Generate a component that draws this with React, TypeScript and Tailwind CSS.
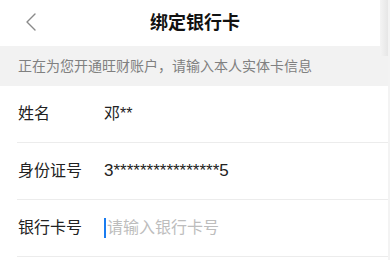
import React from "react";

const font = {
  fontFamily: '"Liberation Sans", "Noto Sans CJK SC", sans-serif',
};

function Row({ label, children }: { label: string; children: React.ReactNode }) {
  return (
    <div className="ml-[17px] flex h-[57px] items-center border-b border-[#ececec]">
      <span className="w-[87px] pl-px text-[16px] text-[#222]">{label}</span>
      <div className="flex items-center text-[16px] text-[#222]">{children}</div>
    </div>
  );
}

export default function App() {
  return (
    <div className="relative h-[260px] w-[390px] overflow-hidden bg-white" style={font}>
      <div className="relative flex h-[46px] items-center justify-center bg-white">
        <svg
          className="absolute left-[24px] top-[12px]"
          width="14"
          height="20"
          viewBox="0 0 14 20"
          fill="none"
        >
          <path d="M11 2 L3 10 L11 18" stroke="#8a8a8a" strokeWidth="1.4" strokeLinecap="round" strokeLinejoin="round" />
        </svg>
        <h1 className="text-[18px] font-bold text-[#111]">绑定银行卡</h1>
      </div>
      <div className="flex h-[40px] items-center bg-[#f2f2f2] pl-[18px] text-[14px] text-[#808080]">
        正在为您开通旺财账户，请输入本人实体卡信息
      </div>
      <Row label="姓名">邓**</Row>
      <Row label="身份证号">
        <span className="text-[17px]">3****************5</span>
      </Row>
      <Row label="银行卡号">
        <span className="mr-px h-[20px] w-[2px] bg-[#1a7cf0]" />
        <span className="text-[#bdbdbd]">请输入银行卡号</span>
      </Row>
      <div className="absolute right-[2px] top-0 h-[56px] w-[8px] bg-gradient-to-r from-[#f4f4f4] to-[#e6e6e6]" />
      <div className="absolute right-0 top-0 h-[260px] w-[2px] bg-[#f3f3f3]" />
    </div>
  );
}
